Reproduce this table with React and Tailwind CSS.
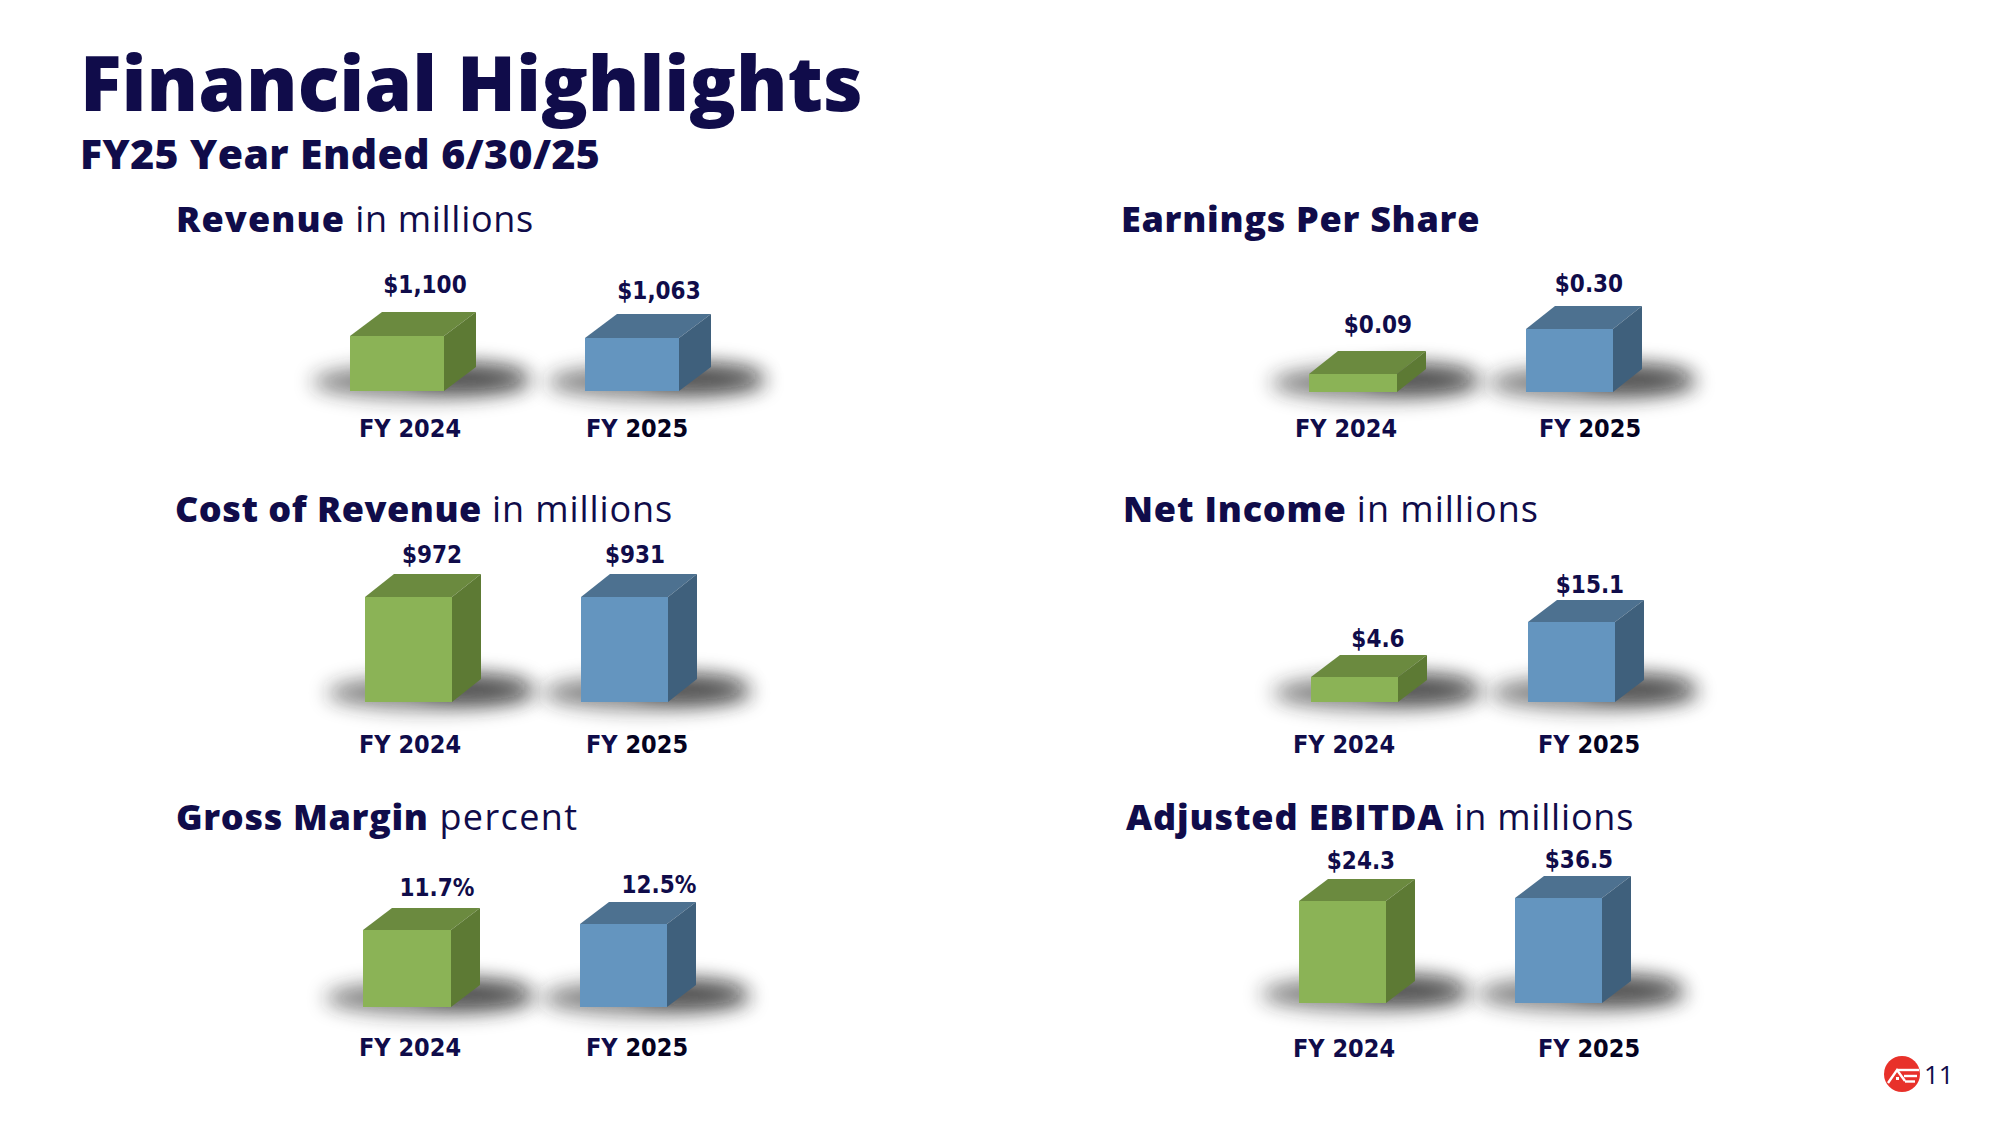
import React from "react";

const NAVY = "#100c4a";
const LABEL_FONT = "'DejaVu Sans Condensed', 'DejaVu Sans', Verdana, sans-serif";

const COLORS = {
  g: { front: "#8bb356", top: "#6b8a3f", side: "#5d7a34" },
  b: { front: "#6495bf", top: "#4d7190", side: "#3f607c" },
};

// one 3D box with its soft floor shadow
const Box = ({ x0, x1, top, bottom, c, dx, dy, fid }) => {
  const col = COLORS[c];
  const left = x0 - 38;
  const right = x1 + dx + 55;
  return (
    <g>
      <ellipse
        cx={(left + right) / 2}
        cy={bottom - 9}
        rx={(right - left) / 2}
        ry={17}
        fill="#222"
        opacity="0.55"
        filter={`url(#${fid})`}
      />
      <ellipse
        cx={x1 + dx / 2 + 8}
        cy={bottom - 15}
        rx={dx + 28}
        ry={13}
        fill="#111"
        opacity="0.5"
        filter={`url(#${fid})`}
      />
      <rect x={x0} y={top} width={x1 - x0} height={bottom - top} fill={col.front} />
      <polygon
        points={`${x0},${top} ${x0 + dx},${top - dy} ${x1 + dx},${top - dy} ${x1},${top}`}
        fill={col.top}
      />
      <polygon
        points={`${x1},${top} ${x1 + dx},${top - dy} ${x1 + dx},${bottom - dy} ${x1},${bottom}`}
        fill={col.side}
      />
    </g>
  );
};

const Chart = ({ id, viewBox, className, dx, dy, bars, cats }) => (
  <svg viewBox={viewBox} className={className}>
    <defs>
      <filter id={id} x="-50%" y="-200%" width="200%" height="500%">
        <feGaussianBlur stdDeviation="10" />
      </filter>
    </defs>
    {bars.map((b, i) => (
      <Box key={i} {...b} dx={dx} dy={dy} fid={id} />
    ))}
    {bars.map((b, i) => (
      <text
        key={"v" + i}
        x={b.lx}
        y={b.ly}
        textAnchor="middle"
        fontFamily={LABEL_FONT}
        fontStretch="condensed"
        fontWeight="700"
        fontSize="24"
        fill={NAVY}
      >
        {b.label}
      </text>
    ))}
    {cats.map((t, i) => (
      <text
        key={"c" + i}
        x={t.x}
        y={t.y}
        textAnchor="middle"
        fontFamily={LABEL_FONT}
        fontStretch="condensed"
        fontWeight="700"
        fontSize="25"
        fill={NAVY}
      >
        FY <tspan fill={i === 1 ? "#05031f" : NAVY}>{t.year}</tspan>
      </text>
    ))}
  </svg>
);

const Heading = ({ bold, rest, className, restClass = "tracking-[0.5px]" }) => (
  <h2 className={`text-[36px] leading-[34px] font-extrabold text-[#100c4a] whitespace-nowrap ${className}`}>
    {bold}
    {rest && <span className={`font-normal ${restClass}`}> {rest}</span>}
  </h2>
);

const Logo = () => (
  <svg viewBox="0 0 36 36" className="w-[36px] h-[36px]">
    <circle cx="18" cy="18" r="18" fill="#e8312a" />
    <polyline points="4,27 13,14 21,25" fill="none" stroke="#fff" strokeWidth="2.4" strokeLinejoin="miter" />
    <polygon points="12,21 15,21 15,24 12,24" fill="#fff" />
    <line x1="13" y1="14" x2="35" y2="14" stroke="#fff" strokeWidth="2.4" />
    <line x1="20" y1="20" x2="33" y2="20" stroke="#fff" strokeWidth="2.4" />
    <line x1="21" y1="25.5" x2="31" y2="25.5" stroke="#fff" strokeWidth="2.4" />
  </svg>
);

export default function App() {
  return (
    <div className="w-[2000px] h-[1125px] bg-white relative overflow-hidden font-['Open_Sans',sans-serif] text-[#100c4a]">
      <div className="pl-[80px] pt-[43px]">
        <h1 className="h-[77px] text-[77px] leading-[77px] font-extrabold">Financial Highlights</h1>
        <p className="mt-[13px] ml-[0px] h-[41px] text-[41px] leading-[41px] font-extrabold tracking-[0.4px]">
          FY25 Year Ended 6/30/25
        </p>
      </div>

      <div className="grid grid-cols-[950px_877px] ml-[173px] mt-[28px]">
        {/* row 1 */}
        <div className="flex flex-col">
          <Heading bold="Revenue" rest="in millions" className="ml-[3px] tracking-[1.1px]" restClass="tracking-[0.7px]" />
          <Chart
            id="s1"
            viewBox="173 236 950 256"
            className="w-[950px] h-[256px]"
            dx={32}
            dy={24}
            bars={[
              { x0: 350, x1: 444, top: 336, bottom: 391, c: "g", label: "$1,100", lx: 425, ly: 293 },
              { x0: 585, x1: 679, top: 338, bottom: 391, c: "b", label: "$1,063", lx: 659, ly: 299 },
            ]}
            cats={[
              { year: "2024", x: 410, y: 437 },
              { year: "2025", x: 637, y: 437 },
            ]}
          />
        </div>
        <div className="flex flex-col">
          <Heading bold="Earnings Per Share" className="ml-[-2px] tracking-[0.7px]" />
          <Chart
            id="s2"
            viewBox="1123 236 877 256"
            className="w-[877px] h-[256px]"
            dx={29}
            dy={23}
            bars={[
              { x0: 1309, x1: 1397, top: 374, bottom: 392, c: "g", label: "$0.09", lx: 1378, ly: 333 },
              { x0: 1526, x1: 1613, top: 329, bottom: 392, c: "b", label: "$0.30", lx: 1589, ly: 292 },
            ]}
            cats={[
              { year: "2024", x: 1346, y: 437 },
              { year: "2025", x: 1590, y: 437 },
            ]}
          />
        </div>

        {/* row 2 */}
        <div className="flex flex-col">
          <Heading bold="Cost of Revenue" rest="in millions" className="ml-[2px] tracking-[0.5px]" restClass="tracking-[0.9px]" />
          <Chart
            id="s3"
            viewBox="173 526 950 274"
            className="w-[950px] h-[274px]"
            dx={29}
            dy={23}
            bars={[
              { x0: 365, x1: 452, top: 597, bottom: 702, c: "g", label: "$972", lx: 432, ly: 563 },
              { x0: 581, x1: 668, top: 597, bottom: 702, c: "b", label: "$931", lx: 635, ly: 563 },
            ]}
            cats={[
              { year: "2024", x: 410, y: 753 },
              { year: "2025", x: 637, y: 753 },
            ]}
          />
        </div>
        <div className="flex flex-col">
          <Heading bold="Net Income" rest="in millions" className="ml-[0px] tracking-[0.8px]" restClass="tracking-[1px]" />
          <Chart
            id="s4"
            viewBox="1123 526 877 274"
            className="w-[877px] h-[274px]"
            dx={29}
            dy={22}
            bars={[
              { x0: 1311, x1: 1398, top: 677, bottom: 702, c: "g", label: "$4.6", lx: 1378, ly: 647 },
              { x0: 1528, x1: 1615, top: 622, bottom: 702, c: "b", label: "$15.1", lx: 1590, ly: 593 },
            ]}
            cats={[
              { year: "2024", x: 1344, y: 753 },
              { year: "2025", x: 1589, y: 753 },
            ]}
          />
        </div>

        {/* row 3 */}
        <div className="flex flex-col">
          <Heading bold="Gross Margin" rest="percent" className="ml-[3px] tracking-[0.65px]" restClass="tracking-[1.4px]" />
          <Chart
            id="s5"
            viewBox="173 834 950 265"
            className="w-[950px] h-[265px]"
            dx={29}
            dy={22}
            bars={[
              { x0: 363, x1: 451, top: 930, bottom: 1007, c: "g", label: "11.7%", lx: 437, ly: 896 },
              { x0: 580, x1: 667, top: 924, bottom: 1007, c: "b", label: "12.5%", lx: 659, ly: 893 },
            ]}
            cats={[
              { year: "2024", x: 410, y: 1056 },
              { year: "2025", x: 637, y: 1056 },
            ]}
          />
        </div>
        <div className="flex flex-col">
          <Heading bold="Adjusted EBITDA" rest="in millions" className="ml-[3px] tracking-[0.85px]" restClass="tracking-[0.8px]" />
          <Chart
            id="s6"
            viewBox="1123 834 877 265"
            className="w-[877px] h-[265px]"
            dx={29}
            dy={22}
            bars={[
              { x0: 1299, x1: 1386, top: 901, bottom: 1003, c: "g", label: "$24.3", lx: 1361, ly: 869 },
              { x0: 1515, x1: 1602, top: 898, bottom: 1003, c: "b", label: "$36.5", lx: 1579, ly: 868 },
            ]}
            cats={[
              { year: "2024", x: 1344, y: 1057 },
              { year: "2025", x: 1589, y: 1057 },
            ]}
          />
        </div>
      </div>

      {/* page number badge */}
      <div className="absolute left-[1884px] top-[1056px] flex items-center gap-[4px]">
        <Logo />
        <span className="text-[26px] leading-none font-normal text-[#100c4a]">11</span>
      </div>
    </div>
  );
}
